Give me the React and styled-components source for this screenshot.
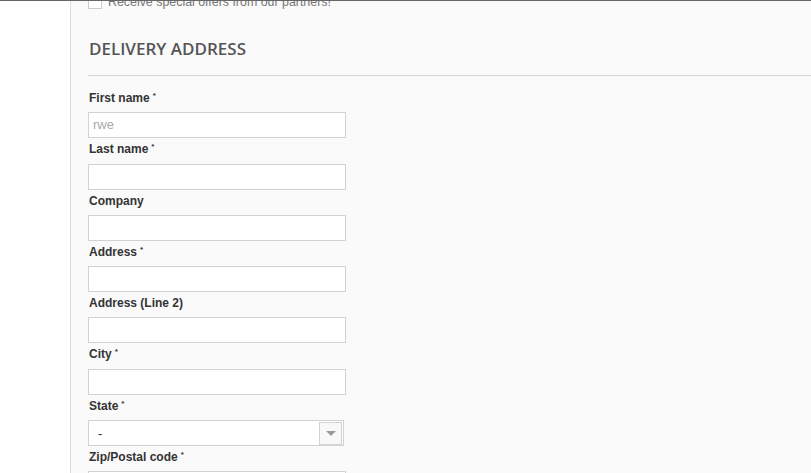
import React from "react";
import styled, { createGlobalStyle } from "styled-components";

const GlobalStyle = createGlobalStyle`
    html, body {
        margin: 0;
        padding: 0;
        background: #ffffff;
        overflow: hidden;
    }
`;

const Page = styled.div`
    display: flex;
    height: 473px;
    border-top: 1px solid #666666;
    box-sizing: border-box;
    font-family: "Liberation Sans", Arial, sans-serif;
`;

const Gutter = styled.div`
    width: 70px;
    flex-shrink: 0;
    background: #ffffff;
`;

const Panel = styled.div`
    flex: 1;
    background: #fafafa;
    border-left: 1px solid #dddddd;
    padding-left: 17px;
    overflow: hidden;
`;

const OptinRow = styled.label`
    display: flex;
    align-items: center;
    gap: 6px;
    margin-top: -8px;
    height: 18px;
    font-size: 12.4px;
    color: #777777;
`;

const Checkbox = styled.span`
    width: 12px;
    height: 12px;
    border: 1px solid #cccccc;
    background: #ffffff;
    flex-shrink: 0;
`;

const Heading = styled.h3`
    margin: 26px 0 0 1px;
    font-family: "Open Sans", sans-serif;
    font-weight: 600;
    font-size: 17px;
    line-height: 24px;
    color: #555555;
    text-transform: uppercase;
`;

const Rule = styled.div`
    height: 1px;
    background: #d6d6d6;
    margin: 14px 0 11px;
`;

const Field = styled.div`
    display: flex;
    flex-direction: column;
    width: 258px;
`;

const Label = styled.span`
    display: block;
    font-size: 12px;
    font-weight: bold;
    line-height: 17.3px;
    color: #333333;
    margin: 3px 0 5px 1px;

    sup {
        font-size: 8px;
        margin-left: 3px;
        vertical-align: 4px;
        line-height: 0;
    }
`;

const Input = styled.div`
    height: 26px;
    box-sizing: border-box;
    border: 1px solid #d2d2d2;
    background: #ffffff;
    font-size: 13px;
    line-height: 24px;
    padding-left: 4px;
    color: ${({ placeholder }) => (placeholder ? "#a8a8a8" : "#333333")};
`;

const Select = styled.div`
    display: flex;
    align-items: center;
    width: 256px;
    height: 26px;
    box-sizing: border-box;
    border: 1px solid #d2d2d2;
    background: #ffffff;
    font-size: 13px;
    color: #333333;
`;

const SelectValue = styled.span`
    flex: 1;
    padding-left: 9px;
`;

const ArrowBox = styled.span`
    display: flex;
    align-items: center;
    justify-content: center;
    width: 21px;
    height: 21px;
    margin-right: 1px;
    border: 1px solid #d2d2d2;
    background: #f8f8f8;
`;

const Arrow = styled.span`
    width: 0;
    height: 0;
    border-left: 5px solid transparent;
    border-right: 5px solid transparent;
    border-top: 5px solid #9a9a9a;
`;

const fields = [
    { label: "First name", required: true, value: "rwe" },
    { label: "Last name", required: true },
    { label: "Company" },
    { label: "Address", required: true },
    { label: "Address (Line 2)" },
    { label: "City", required: true },
    { label: "State", required: true, select: true },
    { label: "Zip/Postal code", required: true },
];

export default function App() {
    return (
        <>
            <GlobalStyle />
            <Page>
                <Gutter />
                <Panel>
                    <OptinRow>
                        <Checkbox />
                        Receive special offers from our partners!
                    </OptinRow>
                    <Heading>Delivery address</Heading>
                    <Rule />
                    {fields.map((f) => (
                        <Field key={f.label}>
                            <Label>
                                {f.label}
                                {f.required && <sup>*</sup>}
                            </Label>
                            {f.select ? (
                                <Select>
                                    <SelectValue>-</SelectValue>
                                    <ArrowBox>
                                        <Arrow />
                                    </ArrowBox>
                                </Select>
                            ) : (
                                <Input placeholder={f.value ? "1" : undefined}>{f.value}</Input>
                            )}
                        </Field>
                    ))}
                </Panel>
            </Page>
        </>
    );
}
